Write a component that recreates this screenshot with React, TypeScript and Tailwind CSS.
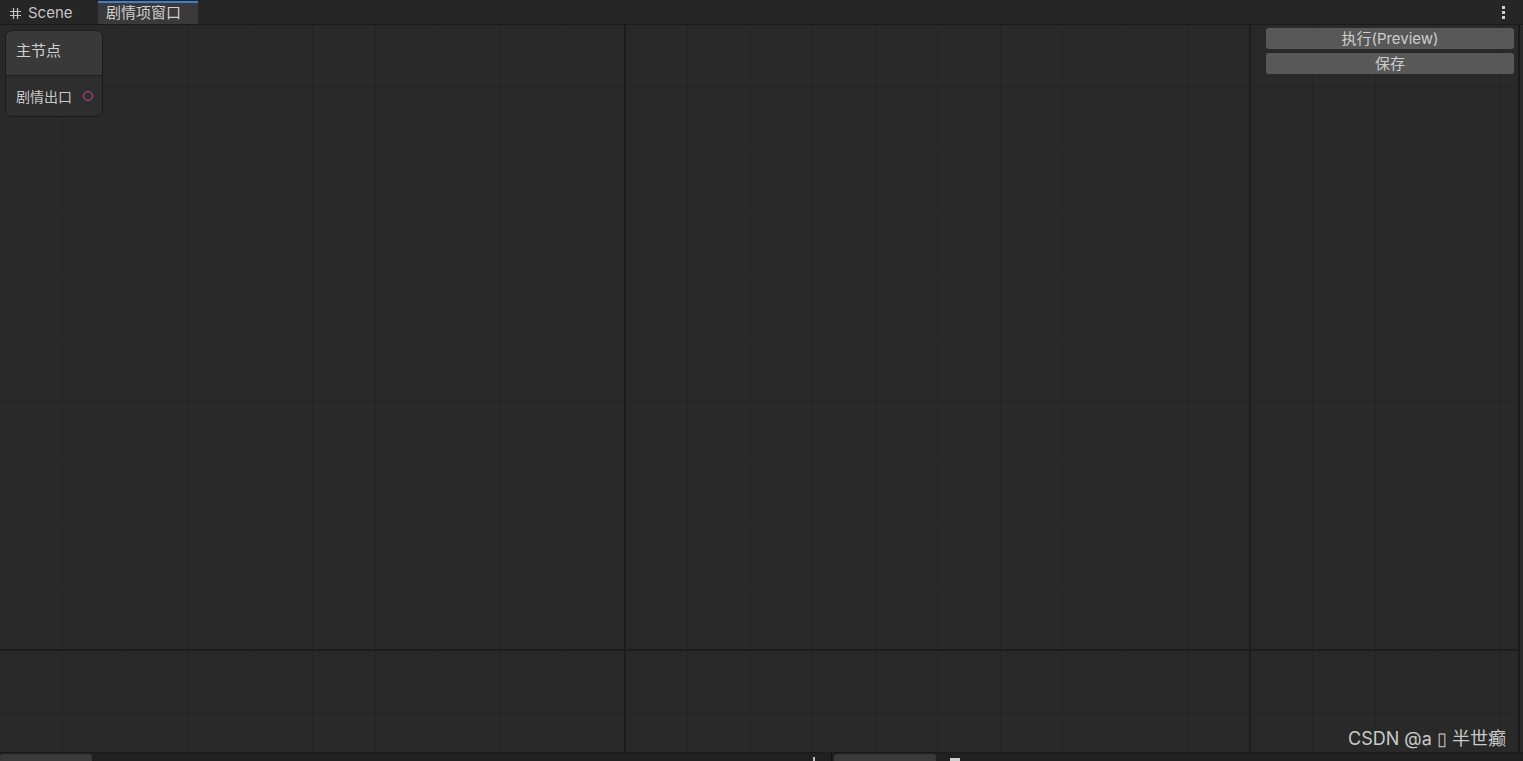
import React from "react";

const STEP = 62.5;
const minorX = Array.from({ length: 25 }, (_, i) => Math.floor(STEP * (i + 1)));
const minorY = Array.from({ length: 12 }, (_, i) => Math.floor(STEP * (i + 1)));

const GridBackdrop = () => (
  <svg className="absolute inset-0 h-full w-full" shapeRendering="crispEdges">
    {minorX.map((x) => (
      <rect key={"x" + x} x={x} y={0} width={1} height="100%" fill="#242424" />
    ))}
    {minorY.map((y) => (
      <rect key={"y" + y} x={0} y={y} width="100%" height={1} fill="#242424" />
    ))}
    <rect x={624} y={0} width={2} height="100%" fill="#1c1c1c" />
    <rect x={1249} y={0} width={2} height="100%" fill="#1c1c1c" />
    <rect x={0} y={624} width="100%" height={2} fill="#1c1c1c" />
  </svg>
);

const SceneIcon = () => (
  <svg width="13" height="13" viewBox="0 0 13 13" className="block h-[13px] w-[13px] shrink-0 text-[#c4c4c4]">
    <path d="M4.5 1v11M8.5 1v11M1 4.5h11M1 8.5h11" stroke="currentColor" strokeWidth="1.2" fill="none" />
  </svg>
);

const StoryNode = () => (
  <div className="absolute left-[5px] top-[5px] w-[98px] overflow-hidden rounded-[7px] border border-[#1b1b1b] bg-[#2e2e2e]">
    <div className="flex h-[45px] items-center border-b border-[#1f1f1f] bg-[#393939] pb-[4px] pl-[10px] text-[15px] text-[#d2d2d2]">
      主节点
    </div>
    <div className="flex h-[40px] items-center justify-between pl-[10px] pr-[9px] text-[14px] text-[#c8c8c8]">
      <span>剧情出口</span>
      <span className="h-[10px] w-[10px] rounded-full border-[1.5px] border-[#e0409c]" />
    </div>
  </div>
);

export default function App() {
  return (
    <div
      className="flex h-[761px] w-[1523px] flex-col overflow-hidden bg-[#191919]"
      style={{ fontFamily: '"Inter", "Noto Sans CJK SC", sans-serif' }}
    >
      {/* tab strip */}
      <div className="flex h-[25px] shrink-0 items-stretch border-b border-[#1a1a1a] bg-[#262626]">
        <div className="flex w-[98px] items-center gap-[6px] pl-[9px] pt-[2px] text-[15px] text-[#c4c4c4]">
          <SceneIcon />
          <span>Scene</span>
        </div>
        <div className="mt-[1px] flex w-[100px] items-center border-t-2 border-[#3d7fcf] bg-[#3a3a3a] pl-[8px] text-[15px] text-[#cfcfcf]">
          剧情项窗口
        </div>
        <div className="flex-1" />
        <div className="flex w-[30px] flex-col items-center justify-center gap-[2px] pr-[10px]">
          <span className="h-[3px] w-[3px] bg-[#d0d0d0]" />
          <span className="h-[3px] w-[3px] bg-[#d0d0d0]" />
          <span className="h-[3px] w-[3px] bg-[#d0d0d0]" />
        </div>
      </div>

      {/* graph canvas */}
      <div className="flex h-[727px] shrink-0">
        <div className="relative flex-1 overflow-hidden bg-[#292929]">
          <GridBackdrop />
          <StoryNode />
          <div className="absolute right-[4px] top-[3px] flex w-[248px] flex-col gap-[4px]">
            <button className="h-[21px] rounded-[3px] bg-[#585858] text-[15px] leading-[21px] text-[#cdcdcd]">
              执行(Preview)
            </button>
            <button className="h-[21px] rounded-[3px] bg-[#585858] text-[15px] leading-[21px] text-[#cdcdcd]">
              保存
            </button>
          </div>
          <div className="absolute bottom-[0px] right-[12px] text-[18px] text-[#c9c9c9]">
            CSDN @a ▯ 半世癫
          </div>
        </div>
        <div className="w-[2px] bg-[#1a1a1a]" />
        <div className="w-[3px] bg-[#2a2a2a]" />
      </div>

      {/* cut-off panel strip below */}
      <div className="flex flex-1 items-end border-t border-[#1a1a1a] bg-[#202020]">
        <div className="h-[7px] w-[92px] rounded-t-[3px] bg-[#3a3a3a]" />
        <div className="flex-1" />
        <div className="mr-[2px] h-[4px] w-[2px] bg-[#bbbbbb]" />
        <div className="mr-[2px] ml-[14px] h-[8px] w-[1px] bg-[#111111]" />
        <div className="h-[7px] w-[102px] rounded-t-[3px] bg-[#3a3a3a]" />
        <div className="ml-[14px] h-[3px] w-[10px] bg-[#cfcfcf]" />
        <div className="w-[563px]" />
      </div>
    </div>
  );
}
